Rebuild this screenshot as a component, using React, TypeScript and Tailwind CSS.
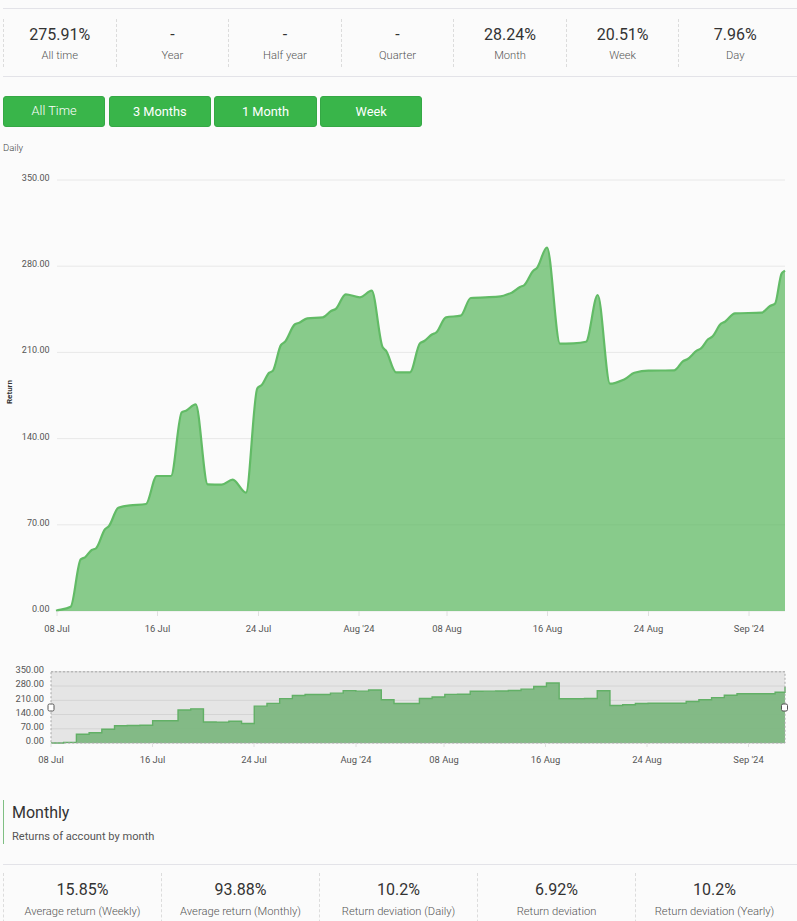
const topStats = [
  { value: '275.91%', label: 'All time' },
  { value: '-', label: 'Year' },
  { value: '-', label: 'Half year' },
  { value: '-', label: 'Quarter' },
  { value: '28.24%', label: 'Month' },
  { value: '20.51%', label: 'Week' },
  { value: '7.96%', label: 'Day' },
]

const bottomStats = [
  { value: '15.85%', label: 'Average return (Weekly)' },
  { value: '93.88%', label: 'Average return (Monthly)' },
  { value: '10.2%', label: 'Return deviation (Daily)' },
  { value: '6.92%', label: 'Return deviation' },
  { value: '10.2%', label: 'Return deviation (Yearly)' },
]

const ranges = ['All Time', '3 Months', '1 Month', 'Week']

// daily values as pixel heights on the main chart, used by the navigator
const ys = [
  610.7, 607, 558, 549, 527.5, 507, 505, 504, 476, 476, 411.5, 404.5, 484.3, 484.5, 479.5, 492.7,
  388, 371.5, 342.5, 323.5, 318, 317.3, 309.5, 294.3, 297.3, 290.7, 349.5, 372.3, 372.3, 342, 333,
  317, 315.7, 298, 297.3, 296.7, 293, 285.3, 269, 247.7, 343.7, 343.3, 341.7, 295, 383.7, 379.3,
  372, 370.7, 370.5, 370.3, 359.5, 349, 336.7, 322, 313.3, 313, 312.7, 303.7, 270.7,
]
const xs = ys.map((_, i) => (i === ys.length - 1 ? 785 : 57 + 12.6 * i))

// curve nodes of the main series, x and y in page pixels
const curve: [number, number][] = [
  [56, 610.7], [70.7, 606.7], [80.7, 559.3], [85, 557.3], [91.7, 550], [96, 548.3], [105, 529.3],
  [109, 526], [118.3, 507.7], [130, 505.3], [146, 504], [156.7, 476], [171, 476], [181.7, 412.3],
  [186, 410.7], [195.7, 404.3], [207.7, 484.3], [221.7, 484.7], [232.7, 479.7], [246, 492.7],
  [257.3, 388.3], [261.7, 385], [269.3, 372.7], [272.7, 371], [281, 345], [285, 341.7], [295, 324.3],
  [299.3, 322.7], [307.3, 318.3], [322.7, 317.3], [331, 311], [335.7, 309], [345.7, 294.3], [360, 297.3],
  [371.7, 290.7], [382.7, 347.3], [386, 350.7], [396, 372.3], [410, 372.3], [420, 343.3], [424.3, 341],
  [432.3, 334.3], [436, 332.7], [446, 317.3], [460.7, 315.7], [470.7, 298], [498.3, 296.7], [511.7, 292.7],
  [520, 287], [524, 285.3], [533.3, 270.7], [536.7, 268.3], [547, 247.7], [560, 343.7], [573.3, 343.3],
  [586, 341.7], [597.7, 295], [610, 383.7], [625, 379], [634.3, 372.7], [648.3, 370.7], [674.3, 370.3],
  [683.3, 361], [687.3, 359.3], [696.7, 350.7], [700.7, 348.7], [708.3, 339], [712.3, 336.7], [721, 323.7],
  [725, 321.7], [735, 313.3], [761.7, 312.7], [770, 306], [775, 303.7], [781.7, 273.3], [785, 270.7],
]

function monotonePath(px: number[], py: number[]) {
  const n = px.length
  const d: number[] = []
  const m: number[] = []
  for (let i = 0; i < n - 1; i++) d.push((py[i + 1] - py[i]) / (px[i + 1] - px[i]))
  m.push(d[0])
  for (let i = 1; i < n - 1; i++) {
    m.push(d[i - 1] * d[i] <= 0 ? 0 : (2 * d[i - 1] * d[i]) / (d[i - 1] + d[i]))
  }
  m.push(d[n - 2])
  let path = `M${px[0]},${py[0]}`
  for (let i = 0; i < n - 1; i++) {
    const h = (px[i + 1] - px[i]) / 3
    path += ` C${px[i] + h},${py[i] + m[i] * h} ${px[i + 1] - h},${py[i + 1] - m[i + 1] * h} ${px[i + 1]},${py[i + 1]}`
  }
  return path
}

const MAIN_TOP = 160
const line = monotonePath(curve.map((p) => p[0]), curve.map((p) => p[1] - MAIN_TOP))
const area = `${line} L785,${611 - MAIN_TOP} L56,${611 - MAIN_TOP} Z`

const NAV_TOP = 660
const navX = (x: number) => 51 + (x - 57) * (734 / 728)
const navY = (y: number) => 743 - NAV_TOP - (611 - y) * 0.1653
let navLine = `M${navX(xs[0])},${navY(ys[0])}`
for (let i = 1; i < xs.length; i++) {
  navLine += ` H${navX(xs[i])} V${navY(ys[i])}`
}
const navArea = `${navLine} V${743 - NAV_TOP} H51 Z`

const mainGrid = [
  { label: '350.00', y: 180 },
  { label: '280.00', y: 266.2 },
  { label: '210.00', y: 352.4 },
  { label: '140.00', y: 438.6 },
  { label: '70.00', y: 524.8 },
  { label: '0.00', y: 611 },
]

const navGrid = [
  { label: '350.00', y: 671.8 },
  { label: '280.00', y: 686 },
  { label: '210.00', y: 700.3 },
  { label: '140.00', y: 714.5 },
  { label: '70.00', y: 728.8 },
  { label: '0.00', y: 743 },
]

const mainTicks = [
  { label: '08 Jul', x: 57 },
  { label: '16 Jul', x: 157.5 },
  { label: '24 Jul', x: 258.5 },
  { label: "Aug '24", x: 359 },
  { label: '08 Aug', x: 447 },
  { label: '16 Aug', x: 547.5 },
  { label: '24 Aug', x: 648.5 },
  { label: "Sep '24", x: 749 },
]

const navTicks = [
  { label: '08 Jul', x: 51 },
  { label: '16 Jul', x: 152.5 },
  { label: '24 Jul', x: 254 },
  { label: "Aug '24", x: 356 },
  { label: '08 Aug', x: 444 },
  { label: '16 Aug', x: 545.5 },
  { label: '24 Aug', x: 647 },
  { label: "Sep '24", x: 748.5 },
]

function Stat({ value, label }: { value: string; label: string }) {
  return (
    <div className="flex flex-col items-center border-l border-dashed border-[#dcdcdc] h-full pt-[6px]">
      <span className="text-[16px] leading-[20px] text-[#333]">{value}</span>
      <span className="text-[11.2px] leading-[14px] mt-[4px] font-light text-[#555] whitespace-nowrap">{label}</span>
    </div>
  )
}

export default function App() {
  return (
    <div
      className="h-[921px] overflow-hidden bg-[#fbfbfb] pt-2"
      style={{ fontFamily: 'Roboto, sans-serif' }}
    >
      {/* Top stats */}
      <div className="ml-[3px] h-[69px] border-y border-[#e3e3e8] py-[10px]">
        <div className="grid grid-cols-7 h-[48px] w-[788px]">
          {topStats.map((s) => (
            <Stat key={s.label} value={s.value} label={s.label} />
          ))}
        </div>
      </div>

      {/* Range buttons */}
      <div className="flex ml-[3px] mt-[19px] gap-[3.5px]">
        {ranges.map((r, i) => (
          <button
            key={r}
            className={
              i === 0
                ? 'w-[102.2px] h-[31px] rounded-[3px] bg-[#39b54a] border border-[#35a845] text-white text-[12.8px] font-light leading-none'
                : 'w-[102.2px] h-[31px] pt-px rounded-[3px] bg-[#39b54a] border border-[#35a845] text-white text-[12.8px] leading-none'
            }
          >
            {r}
          </button>
        ))}
      </div>

      <div className="ml-[3px] mt-[14px] h-[19px] text-[9.5px] leading-[13px] font-light text-[#444]">Daily</div>

      {/* Main chart */}
      <svg width={797} height={480} className="block" fontFamily="Roboto, sans-serif">
        {mainGrid.map((g) => (
          <g key={g.label}>
            <line x1={57} x2={785} y1={g.y - MAIN_TOP} y2={g.y - MAIN_TOP} stroke="#e8e8e8" strokeWidth={1} />
            <text x={49.5} y={g.y - MAIN_TOP + 1} textAnchor="end" fontSize={9} fill="#555">
              {g.label}
            </text>
          </g>
        ))}
        <path d={area} fill="#5cb860" fillOpacity={0.72} />
        <path d={line} fill="none" stroke="#62bb66" strokeWidth={2.2} />
        {mainTicks.map((t) => (
          <g key={t.label}>
            <line x1={t.x} x2={t.x} y1={611 - MAIN_TOP} y2={616 - MAIN_TOP} stroke="#e0e0e0" />
            <text x={t.x} y={632 - MAIN_TOP} textAnchor="middle" fontSize={9.4} fill="#555">
              {t.label}
            </text>
          </g>
        ))}
        <text
          transform={`translate(12 ${392 - MAIN_TOP}) rotate(-90)`}
          textAnchor="middle"
          fontSize={8}
          fontWeight={700}
          fill="#333"
        >
          Return
        </text>
      </svg>

      {/* Navigator */}
      <svg width={797} height={110} className="block mt-[20px]" fontFamily="Roboto, sans-serif">
        <rect x={51} y={671.8 - NAV_TOP} width={734} height={71.2} fill="#e5e5e5" />
        {navGrid.map((g) => (
          <g key={g.label}>
            <line x1={51} x2={785} y1={g.y - NAV_TOP} y2={g.y - NAV_TOP} stroke="#d4d4d4" />
            <text x={44} y={g.y - NAV_TOP + 1.2} textAnchor="end" fontSize={9.3} fill="#555">
              {g.label}
            </text>
          </g>
        ))}
        <path d={navArea} fill="#7cb780" fillOpacity={0.94} />
        <path d={navLine} fill="none" stroke="#62b066" strokeWidth={1.4} />
        <rect
          x={51}
          y={671.8 - NAV_TOP}
          width={734}
          height={71.2}
          fill="none"
          stroke="#a8a8a8"
          strokeDasharray="2 2"
        />
        {navTicks.map((t) => (
          <g key={t.label}>
            <line x1={t.x} x2={t.x} y1={743 - NAV_TOP} y2={747 - NAV_TOP} stroke="#e0e0e0" />
            <text x={t.x} y={763 - NAV_TOP} textAnchor="middle" fontSize={9.4} fill="#555">
              {t.label}
            </text>
          </g>
        ))}
        <rect x={48} y={704 - NAV_TOP} width={6} height={7} rx={1.5} fill="#fff" stroke="#555" />
        <rect x={781.5} y={704 - NAV_TOP} width={6} height={7} rx={1.5} fill="#fff" stroke="#555" />
      </svg>

      {/* Monthly header */}
      <div className="ml-[3px] mt-[30px] h-[44px] border-l border-[#7fbf83] pl-[8px]">
        <div className="text-[16px] leading-[22px] pt-[2px] text-[#333]">Monthly</div>
        <div className="text-[11.1px] leading-[14px] mt-[6px] text-[#555]">Returns of account by month</div>
      </div>

      {/* Bottom stats */}
      <div className="ml-[3px] mt-[20px] border-t border-[#e3e3e8] pt-[8px]">
        <div className="grid grid-cols-5 h-[60px] w-[790px]">
          {bottomStats.map((s) => (
            <div key={s.label} className="pt-[1px] border-l border-dashed border-[#dcdcdc] h-full">
              <div className="flex flex-col items-center pt-[6px]">
                <span className="text-[16px] leading-[20px] text-[#333]">{s.value}</span>
                <span className="text-[11.2px] leading-[14px] mt-[5px] font-light text-[#555] whitespace-nowrap">
                  {s.label}
                </span>
              </div>
            </div>
          ))}
        </div>
      </div>
    </div>
  )
}
